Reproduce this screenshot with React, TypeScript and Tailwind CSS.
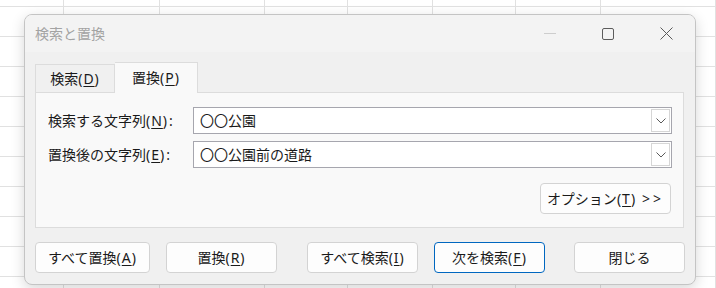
import React from "react";

const colWidths = [67, 101, 110, 87, 89, 87, 89, 120];
const rowHeights = [7, 30, 30, 30, 30, 30, 30, 30, 30, 30];

function Chevron() {
  return (
    <svg width="10" height="6" viewBox="0 0 10 6" fill="none">
      <path d="M0.5 0.5 L5 5 L9.5 0.5" stroke="#5a5a5a" strokeWidth="1" />
    </svg>
  );
}

function ComboBox({ value }: { value: string }) {
  return (
    <div className="flex h-[27px] w-[479px] items-stretch border border-[#a6a6ae] bg-white">
      <div className="flex flex-1 items-center pl-[6px] text-[14px] text-[#1a1a1a]">{value}</div>
      <div className="m-px flex w-[19px] items-center justify-center border border-[#d6d6d6] bg-white">
        <Chevron />
      </div>
    </div>
  );
}

function Btn({
  children,
  w,
  primary,
  className = "",
}: {
  children: React.ReactNode;
  w: string;
  primary?: boolean;
  className?: string;
}) {
  return (
    <div
      className={`flex h-[31px] items-center justify-center rounded-[4px] border bg-[#fdfdfd] text-[14px] text-[#1a1a1a] ${
        primary ? "border-[#0067c0]" : "border-[#d3d3d3]"
      } ${w} ${className}`}
    >
      {children}
    </div>
  );
}

const K = ({ c }: { c: string }) => (
  <span className="tracking-[1px]">
    (<span className="underline underline-offset-2">{c}</span>)
  </span>
);

export default function App() {
  return (
    <div
      className="relative h-[288px] w-[716px] overflow-hidden bg-white"
      style={{ fontFamily: '"Noto Sans", "Noto Sans CJK JP", sans-serif' }}
    >
      {/* spreadsheet grid backdrop */}
      <div className="absolute inset-0 flex flex-col">
        {rowHeights.map((h, i) => (
          <div key={i} className="box-border border-b border-[#e1e1e1]" style={{ height: h }} />
        ))}
      </div>
      <div className="absolute inset-0 flex">
        {colWidths.map((w, i) => (
          <div key={i} className="box-border h-full border-r border-[#e1e1e1]" style={{ width: w }} />
        ))}
      </div>

      {/* dialog */}
      <div className="absolute left-[24px] top-[14px] flex h-[271px] w-[672px] flex-col overflow-hidden rounded-[8px] border border-[#c4c4c4] bg-[#f0f0f0] shadow-[0_4px_14px_rgba(0,0,0,0.16)]">
        {/* title bar */}
        <div className="flex h-[37px] items-center bg-[#f3f3f3]">
          <div className="pl-[10px] text-[14px] text-[#a3a3a3]">検索と置換</div>
          <div className="ml-auto flex h-full">
            <div className="flex w-[58px] items-center justify-center">
              <div className="h-px w-[12px] bg-[#cdcdcd]" />
            </div>
            <div className="flex w-[58px] items-center justify-center">
              <div className="h-[12px] w-[12px] rounded-[2px] border border-[#5c5c5c]" />
            </div>
            <div className="flex w-[58px] items-center justify-center">
              <svg width="13" height="13" viewBox="0 0 13 13" fill="none">
                <path d="M0.5 0.5 L12.5 12.5 M12.5 0.5 L0.5 12.5" stroke="#5a5a5a" strokeWidth="1" />
              </svg>
            </div>
          </div>
        </div>

        <div className="flex flex-col px-[10px]">
          {/* tabs */}
          <div className="relative z-10 mt-[10px] flex h-[30px] items-end">
            <div className="flex h-[28px] w-[80px] items-center justify-center border border-b-0 border-[#dcdcdc] bg-[#f0f0f0] text-[14px] text-[#1a1a1a]">
              検索<K c="D" />
            </div>
            <div className="-mb-px flex h-[31px] w-[83px] items-center justify-center border border-b-0 border-l-0 border-[#dcdcdc] bg-[#f9f9f9] pb-[2px] text-[14px] text-[#1a1a1a]">
              置換<K c="P" />
            </div>
          </div>

          {/* panel */}
          <div className="flex h-[136px] w-[649px] flex-col border border-[#dcdcdc] bg-[#f9f9f9] pl-[12px] pt-[14px]">
            <div className="flex items-center">
              <div className="w-[145px] text-[14px] text-[#1a1a1a]">
                検索する文字列<K c="N" />
                <span className="ml-px">:</span>
              </div>
              <ComboBox value="〇〇公園" />
            </div>
            <div className="mt-[7px] flex items-center">
              <div className="w-[145px] text-[14px] text-[#1a1a1a]">
                置換後の文字列<K c="E" />
                <span className="ml-px">:</span>
              </div>
              <ComboBox value="〇〇公園前の道路" />
            </div>
            <div className="mt-[15px] flex justify-end pr-[12px]">
              <Btn w="w-[131px]">
                オプション<K c="T" />
                <span className="ml-[6px] tracking-[3px]">&gt;&gt;</span>
              </Btn>
            </div>
          </div>

          {/* bottom buttons */}
          <div className="mt-[14px] flex">
            <Btn w="w-[115px]">
              すべて置換<K c="A" />
            </Btn>
            <Btn w="w-[111px]" className="ml-[16px]">
              置換<K c="R" />
            </Btn>
            <Btn w="w-[111px]" className="ml-[30px]">
              すべて検索<K c="I" />
            </Btn>
            <Btn w="w-[111px]" primary className="ml-[16px]">
              次を検索<K c="F" />
            </Btn>
            <Btn w="w-[111px]" className="ml-[29px]">
              閉じる
            </Btn>
          </div>
        </div>
      </div>
    </div>
  );
}
